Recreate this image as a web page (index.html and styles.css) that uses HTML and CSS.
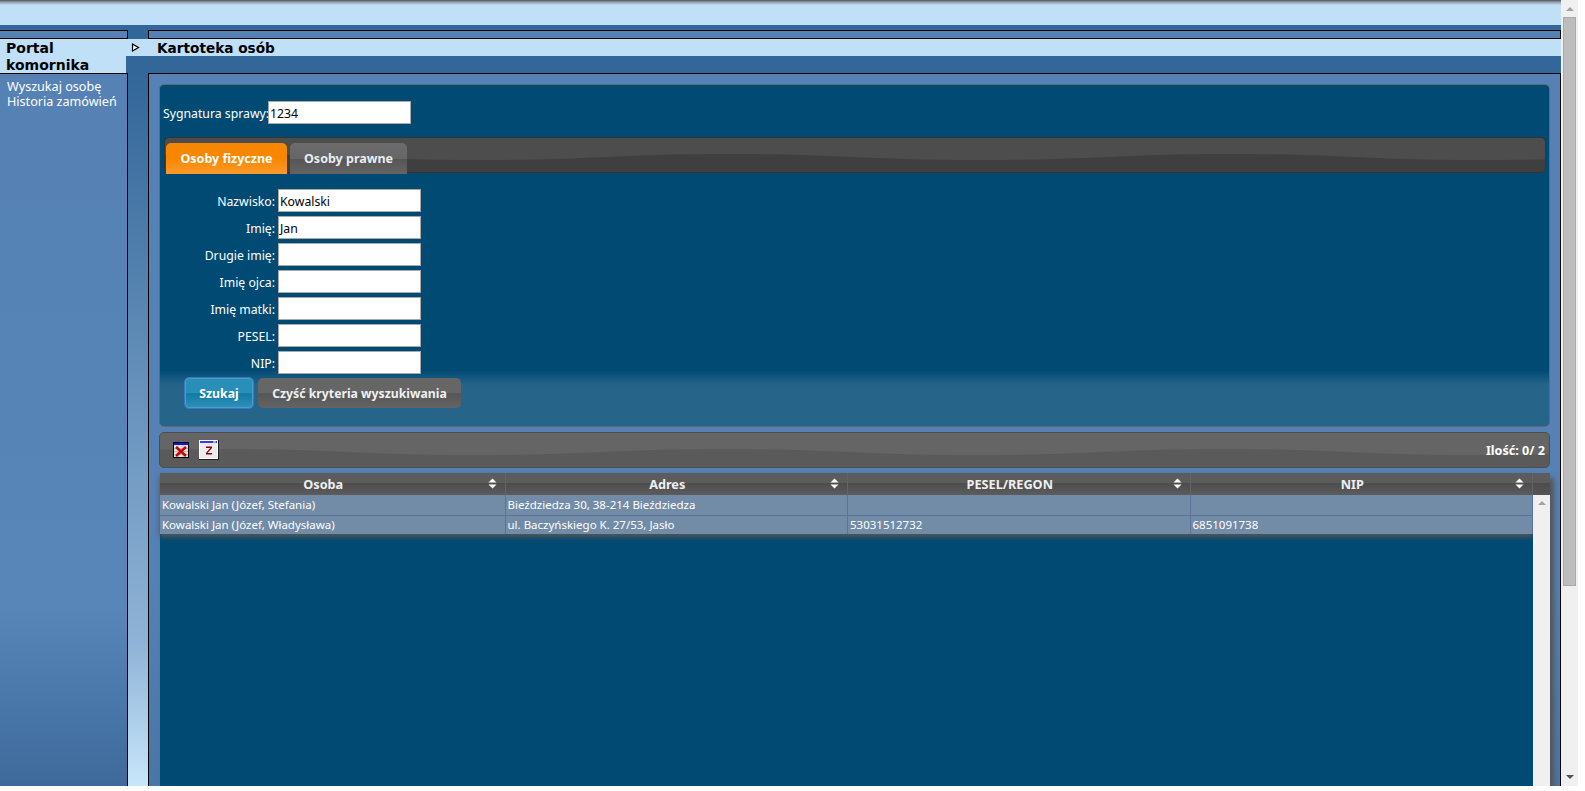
FILE: index.html
```html
<!DOCTYPE html>
<html lang="pl">
<head>
<meta charset="utf-8">
<title>Kartoteka osób</title>
<link rel="stylesheet" href="styles.css">
</head>
<body>
<div class="window">
  <div class="page">
    <div class="topbar"></div>
    <div class="stubs">
      <div class="stub stub-left"></div>
      <div class="stub stub-right"></div>
    </div>
    <div class="heads">
      <h1 class="portal-title">Portal komornika</h1>
      <div class="head-right">
        <div class="title-strip">
          <span class="arrow-cell">
            <svg class="arrow-icon" width="9" height="9" viewBox="0 0 9 9"><path d="M1.5 1 L7.5 4.5 L1.5 8 Z" fill="#fff" stroke="#000" stroke-width="1.2"/></svg>
          </span>
          <h2 class="page-title">Kartoteka osób</h2>
        </div>
      </div>
    </div>
    <div class="body">
      <nav class="sidebar">
        <a class="nav-link">Wyszukaj osobę</a>
        <a class="nav-link">Historia zamówień</a>
      </nav>
      <div class="gutter"></div>
      <main class="main">
        <section class="search-card">
          <div class="case-row">
            <label class="case-label">Sygnatura sprawy:</label>
            <span class="field">1234</span>
          </div>
          <div class="tabbar">
            <span class="tab tab-active">Osoby fizyczne</span>
            <span class="tab">Osoby prawne</span>
          </div>
          <div class="form">
            <label class="form-label">Nazwisko:</label><span class="field">Kowalski</span>
            <label class="form-label">Imię:</label><span class="field">Jan</span>
            <label class="form-label">Drugie imię:</label><span class="field"></span>
            <label class="form-label">Imię ojca:</label><span class="field"></span>
            <label class="form-label">Imię matki:</label><span class="field"></span>
            <label class="form-label">PESEL:</label><span class="field"></span>
            <label class="form-label">NIP:</label><span class="field"></span>
          </div>
          <div class="actions">
            <span class="btn btn-primary">Szukaj</span>
            <span class="btn btn-clear">Czyść kryteria wyszukiwania</span>
          </div>
        </section>
        <div class="toolbar">
          <svg class="tool tool-x" width="16" height="16" viewBox="0 0 16 16">
            <rect x="0" y="0" width="16" height="16" fill="#000"/>
            <rect x="1" y="1" width="14" height="2" fill="#1414e0"/>
            <rect x="1" y="3" width="14" height="12" fill="#e4e4e4"/>
            <path d="M1 6.5 H15 M1 9.5 H15 M1 12.5 H15 M5 3 V15 M10 3 V15" stroke="#bdbdbd" stroke-width="1"/>
            <path d="M3 5 L13 14 M13 5 L3 14" stroke="#c80000" stroke-width="2.4"/>
          </svg>
          <svg class="tool tool-z" width="20" height="20" viewBox="0 0 20 20">
            <rect x="0" y="0" width="20" height="20" fill="#222"/>
            <rect x="0" y="0" width="19" height="19" fill="#fff"/>
            <rect x="1" y="1" width="17" height="17" fill="#ececec"/>
            <rect x="1" y="1" width="17" height="2" fill="#3a3ae0"/>
            <rect x="14" y="1.5" width="3" height="1" fill="#fff"/>
            <path d="M7 6.5 H13 V8 L8.5 13 H13 V14.5 H7 V13 L11.2 8 H7 Z" fill="#8c0000"/>
          </svg>
          <span class="count">Ilość: 0/ 2</span>
        </div>
        <div class="grid-widget">
          <div class="grid-scroll">
            <table class="grid">
              <thead>
                <tr>
                  <th class="col-first"><span class="th-text">Osoba</span><svg class="sort" width="9" height="11" viewBox="0 0 9 11"><path d="M4.5 0.5 L8.5 4.5 H0.5 Z M4.5 10.5 L8.5 6.5 H0.5 Z" fill="#fff"/></svg></th>
                  <th><span class="th-text">Adres</span><svg class="sort" width="9" height="11" viewBox="0 0 9 11"><path d="M4.5 0.5 L8.5 4.5 H0.5 Z M4.5 10.5 L8.5 6.5 H0.5 Z" fill="#fff"/></svg></th>
                  <th><span class="th-text">PESEL/REGON</span><svg class="sort" width="9" height="11" viewBox="0 0 9 11"><path d="M4.5 0.5 L8.5 4.5 H0.5 Z M4.5 10.5 L8.5 6.5 H0.5 Z" fill="#fff"/></svg></th>
                  <th><span class="th-text">NIP</span><svg class="sort" width="9" height="11" viewBox="0 0 9 11"><path d="M4.5 0.5 L8.5 4.5 H0.5 Z M4.5 10.5 L8.5 6.5 H0.5 Z" fill="#fff"/></svg></th>
                </tr>
              </thead>
              <tbody>
                <tr>
                  <td>Kowalski Jan (Józef, Stefania)</td>
                  <td>Bieździedza 30, 38-214 Bieździedza</td>
                  <td></td>
                  <td></td>
                </tr>
                <tr>
                  <td>Kowalski Jan (Józef, Władysława)</td>
                  <td>ul. Baczyńskiego K. 27/53, Jasło</td>
                  <td>53031512732</td>
                  <td>6851091738</td>
                </tr>
              </tbody>
            </table>
          </div>
          <div class="inner-scrollbar">
            <div class="inner-corner"></div>
            <div class="inner-track"><span class="tri tri-up"></span></div>
          </div>
        </div>
      </main>
    </div>
  </div>
  <div class="page-scrollbar">
    <span class="tri tri-up sb-up"></span>
    <div class="sb-thumb"></div>
    <span class="tri tri-down sb-down"></span>
  </div>
</div>
</body>
</html>
```
FILE: styles.css
```css
* { box-sizing: border-box; }
html, body { margin: 0; padding: 0; background: #fff; overflow: hidden; }
body {
  height: 791px;
  font-family: "Noto Sans", "Open Sans", sans-serif;
  font-size: 12.25px;
  color: #fff;
}
.window { display: flex; width: 1578px; height: 786px; }
.page {
  width: 1561px;
  height: 786px;
  display: flex;
  flex-direction: column;
  overflow: hidden;
  background: #336699;
}
.topbar {
  height: 25px;
  flex: none;
  background: linear-gradient(#4f5359 0, #8d9aa6 2px, #c0e0f8 5px, #c0e0f8 100%);
}
.stubs { height: 14px; flex: none; padding-top: 5px; display: flex; }
.stub { height: 9px; background: #5581b4; border-top: 1px solid #000; border-bottom: 1px solid #000; }
.stub-left { width: 128px; border-right: 1px solid #000; }
.stub-right { margin-left: 20px; flex: 1; border-left: 1px solid #000; border-right: 1px solid #000; }

.heads { display: flex; height: 34px; flex: none; }
.portal-title {
  margin: 0;
  width: 126px;
  height: 34px;
  padding: 1px 0 0 6px;
  background: #c0e0f8;
  color: #000;
  font: bold 14px/17px "DejaVu Sans", Verdana, sans-serif;
}
.head-right { flex: 1; }
.title-strip { height: 17px; background: #c0e0f8; display: flex; align-items: center; }
.arrow-cell { width: 31px; display: flex; padding-left: 5px; flex: none; }
.page-title { margin: 0; padding-top: 2px; color: #000; font: bold 13.65px/17px "DejaVu Sans", Verdana, sans-serif; }

.body { display: flex; flex: 1; min-height: 0; }
.sidebar {
  width: 128px;
  flex: none;
  border-right: 1px solid #000;
  border-top: 1px solid #000;
  padding: 5px 0 0 7px;
  display: flex;
  flex-direction: column;
  background: linear-gradient(#5581b4 0, #5886b8 75%, #3d6a9b 100%);
}
.nav-link { font-size: 12.6px; line-height: 15px; color: #fff; }
.gutter { width: 20px; flex: none; background: linear-gradient(#336699 0, #8fb3d6 80%, #c8e6fb 100%); }
.main {
  flex: 1;
  min-width: 0;
  border-top: 1px solid #000;
  border-left: 1px solid #000;
  border-right: 1px solid #000;
  padding: 10px 10px 0 10px;
  display: flex;
  flex-direction: column;
  overflow: hidden;
  background: linear-gradient(#5581b4 0, #5581b4 70%, #4a76a6 100%);
}

.search-card {
  height: 343px;
  flex: none;
  border: 1px solid #5b6a78;
  border-radius: 5px;
  padding: 15px 0 0 3px;
  background: linear-gradient(#004a73 0, #004a73 285px, #26648a 300px, #26648a 100%);
}
.case-row { display: flex; align-items: center; height: 24px; }
.case-label { line-height: 24px; padding-top: 3px; width: 105px; flex: none; white-space: nowrap; }
.field {
  display: block;
  width: 143px;
  height: 23px;
  background: #fff;
  border: 1px solid #a9a9a9;
  color: #000;
  font-size: 12.25px;
  line-height: 23px;
  padding-left: 1px;
}
.tabbar {
  margin: 13px 3px 0 1px;
  height: 36px;
  display: flex;
  gap: 3px;
  padding: 5px 0 0 1px;
  border: 1px solid #333;
  border-radius: 5px;
  background:
    url("data:image/svg+xml,%3Csvg xmlns='http://www.w3.org/2000/svg' width='500' height='36'%3E%3Cpath d='M0 22 C125 22 125 16 250 16 C375 16 375 22 500 22 V36 H0 Z' fill='%233f3f3f'/%3E%3C/svg%3E") 315px 0 repeat-x,
    #4d4d4d;
}
.tab {
  width: 117px;
  height: 31px;
  display: flex;
  align-items: center;
  justify-content: center;
  flex: none;
  border-radius: 5px 5px 0 0;
  font-weight: 700;
  font-size: 12.5px;
  color: #e8edf2;
  background: linear-gradient(#6c6c6c 0, #666 50%, #565656 52%, #646464 100%);
}
.tab-active {
  width: 121px;
  color: #fff;
  background: linear-gradient(#f88700 0, #f88700 50%, #fa9a2c 100%);
}

.form {
  display: grid;
  grid-template-columns: 111px 143px;
  column-gap: 3px;
  grid-auto-rows: 23px;
  row-gap: 4px;
  margin: 16px 0 0 1px;
  width: 260px;
}
.form-label { text-align: right; line-height: 25px; }
.actions { display: flex; align-items: center; gap: 4px; margin: 3px 0 0 21px; }
.btn {
  height: 30px;
  display: flex;
  align-items: center;
  justify-content: center;
  border-radius: 5px;
  font-weight: 700;
  font-size: 12.25px;
  color: #f0f0f0;
  background: linear-gradient(#666 0, #666 50%, #565656 52%, #646464 100%);
}
.btn-clear { width: 203px; }
.btn-primary {
  width: 70px;
  height: 32px;
  color: #fff;
  border: 1px solid #3b78c4;
  box-shadow: inset 0 0 0 1px #4a9ccb;
  background: linear-gradient(#2a8fb8 0, #2a8fb8 50%, #0f7aa5 52%, #2f92ba 100%);
}

.toolbar {
  height: 36px;
  flex: none;
  margin-top: 5px;
  display: flex;
  align-items: center;
  padding: 0 4px 0 13px;
  border: 1px solid #4d4d4d;
  border-radius: 5px;
  background:
    url("data:image/svg+xml,%3Csvg xmlns='http://www.w3.org/2000/svg' width='500' height='36'%3E%3Cpath d='M0 22 C125 22 125 16 250 16 C375 16 375 22 500 22 V36 H0 Z' fill='%235a5a5a'/%3E%3C/svg%3E") 315px 0 repeat-x,
    #656565;
}
.tool-x { margin-top: -1px; }
.tool-z { margin-left: 10px; margin-top: 0; }
.count { margin-left: auto; font-weight: 700; font-size: 12.6px; }

.grid-widget {
  flex: 1;
  min-height: 0;
  margin: 5px 0 0 1px;
  display: flex;
  background: #004a73;
  box-shadow: 4px 5px 5px #555;
}
.grid-scroll { width: 1373px; flex: none; }
.grid {
  width: 1373px;
  table-layout: fixed;
  border-collapse: collapse;
  box-shadow: 0 3px 5px #555;
}
.grid th {
  position: relative;
  height: 22px;
  padding: 0 18px 0 0;
  font-size: 12.7px;
  font-weight: 700;
  color: #f0f0f0;
  background: linear-gradient(#5c5c5c 0, #5c5c5c 45%, #4d4d4d 47%, #5c5c5c 100%);
  border-right: 1px solid #646464;
}
.grid th.col-first { width: 345px; }
.sort { position: absolute; right: 8px; top: 5px; }
.grid td {
  height: 20px;
  padding: 0 2px;
  font-size: 11.5px;
  color: #fff;
  background: #728ba6;
  border-right: 1px solid #5c719b;
  border-bottom: 1px solid #5c719b;
  white-space: nowrap;
  overflow: hidden;
}
.grid tbody tr:last-child td { height: 19px; border-bottom: 0; }
.inner-scrollbar { width: 17px; flex: none; display: flex; flex-direction: column; }
.inner-corner { height: 22px; background: linear-gradient(#5c5c5c 0, #5c5c5c 45%, #4d4d4d 47%, #555 100%); }
.inner-track { flex: 1; background: #f0f0f0; display: flex; justify-content: center; padding-top: 6px; }

.tri { display: block; width: 0; height: 0; border-left: 4px solid transparent; border-right: 4px solid transparent; }
.tri-up { border-bottom: 4px solid #a3a3a3; }
.tri-down { border-top: 4px solid #505050; }

.page-scrollbar {
  width: 17px;
  height: 786px;
  flex: none;
  background: #f0f0f0;
  display: flex;
  flex-direction: column;
  align-items: center;
  padding-top: 7px;
}
.sb-thumb { width: 13px; height: 569px; margin-top: 6px; background: #bdbdbd; border: 1px solid #a9a9a9; }
.sb-down { margin-top: auto; margin-bottom: 7px; }
```
